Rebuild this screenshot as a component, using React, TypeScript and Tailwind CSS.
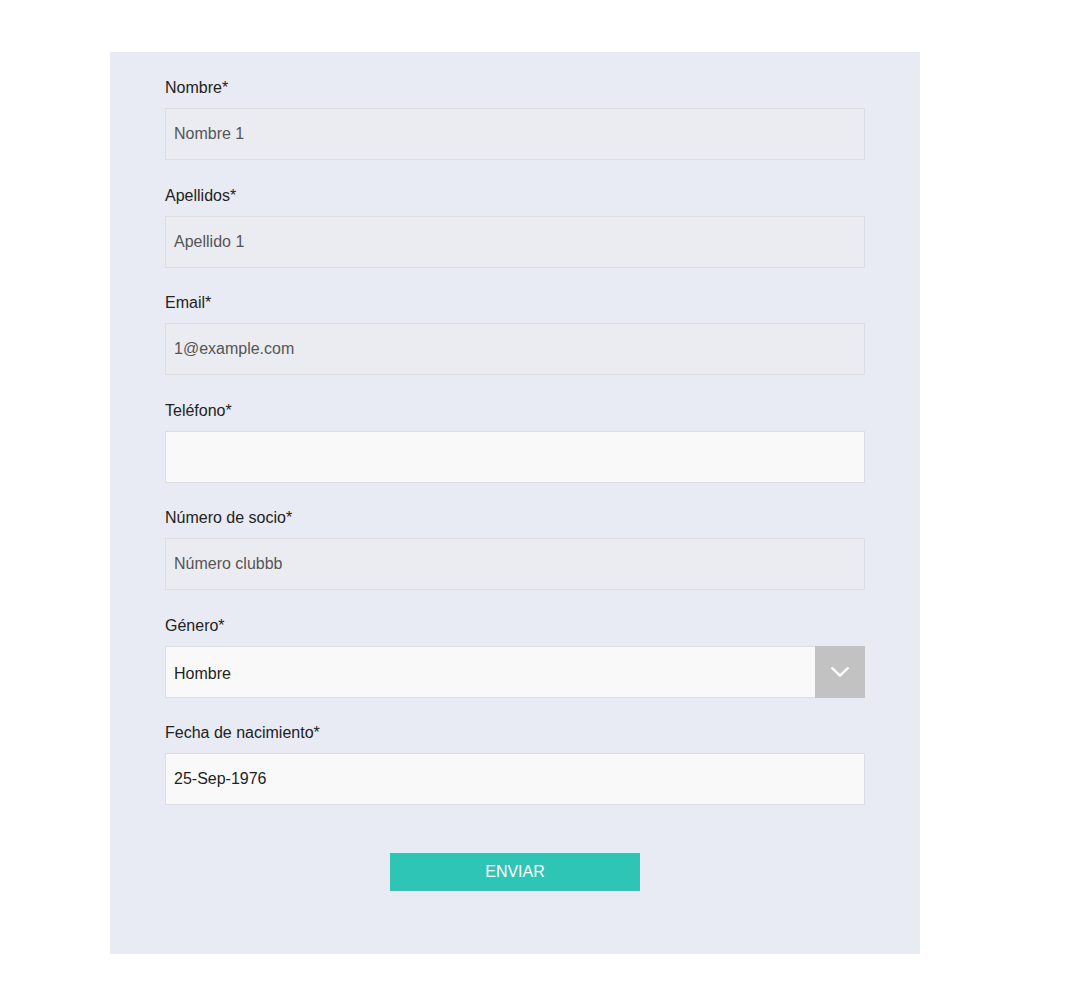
import React from "react";

function Field({ label, children }: { label: string; children: React.ReactNode }) {
  return (
    <div className="mb-[23.5px]">
      <label className="block h-[24px] leading-[24px] mb-[8px] text-[16px] text-[#222222]">{label}</label>
      {children}
    </div>
  );
}

function DisabledInput({ value }: { value: string }) {
  return (
    <div className="h-[52px] w-full border border-[#dcdde3] bg-[#ebecf1] px-[8px] flex items-center text-[16px] text-[#555555]">
      {value}
    </div>
  );
}

function EnabledInput({ value }: { value: string }) {
  return (
    <div className="h-[52px] w-full border border-[#dcdde3] bg-[#f9f9f9] px-[8px] flex items-center text-[16px] text-[#1f1f1f]">
      {value}
    </div>
  );
}

export default function App() {
  return (
    <div className="min-h-[985px] bg-white pt-[52px] pl-[110px]" style={{ fontFamily: '"Liberation Sans", Arial, sans-serif' }}>
      <div className="w-[810px] bg-[#e8ebf3] pt-[24px] px-[55px] pb-[63px]">
        <Field label="Nombre*">
          <DisabledInput value="Nombre 1" />
        </Field>
        <Field label="Apellidos*">
          <DisabledInput value="Apellido 1" />
        </Field>
        <Field label="Email*">
          <DisabledInput value="1@example.com" />
        </Field>
        <Field label="Teléfono*">
          <EnabledInput value="" />
        </Field>
        <Field label="Número de socio*">
          <DisabledInput value="Número clubbb" />
        </Field>
        <Field label="Género*">
          <div className="h-[52px] w-full border border-[#dcdde3] bg-[#f9f9f9] flex items-stretch text-[16px] text-[#1f1f1f]">
            <div className="flex-1 px-[8px] pt-[5px] flex items-center">Hombre</div>
            <div className="w-[50px] bg-[#c2c2c2] flex items-center justify-center -my-px -mr-px">
              <svg width="20" height="12" viewBox="0 0 20 12" fill="none">
                <path d="M1.5 1.5 L10 9.5 L18.5 1.5" stroke="#ffffff" strokeWidth="2.4" />
              </svg>
            </div>
          </div>
        </Field>
        <Field label="Fecha de nacimiento*">
          <EnabledInput value="25-Sep-1976" />
        </Field>
        <div className="flex justify-center pt-[24px]">
          <button className="w-[250px] h-[38px] bg-[#2fc5b5] text-white text-[16px] flex items-center justify-center">
            ENVIAR
          </button>
        </div>
      </div>
    </div>
  );
}
